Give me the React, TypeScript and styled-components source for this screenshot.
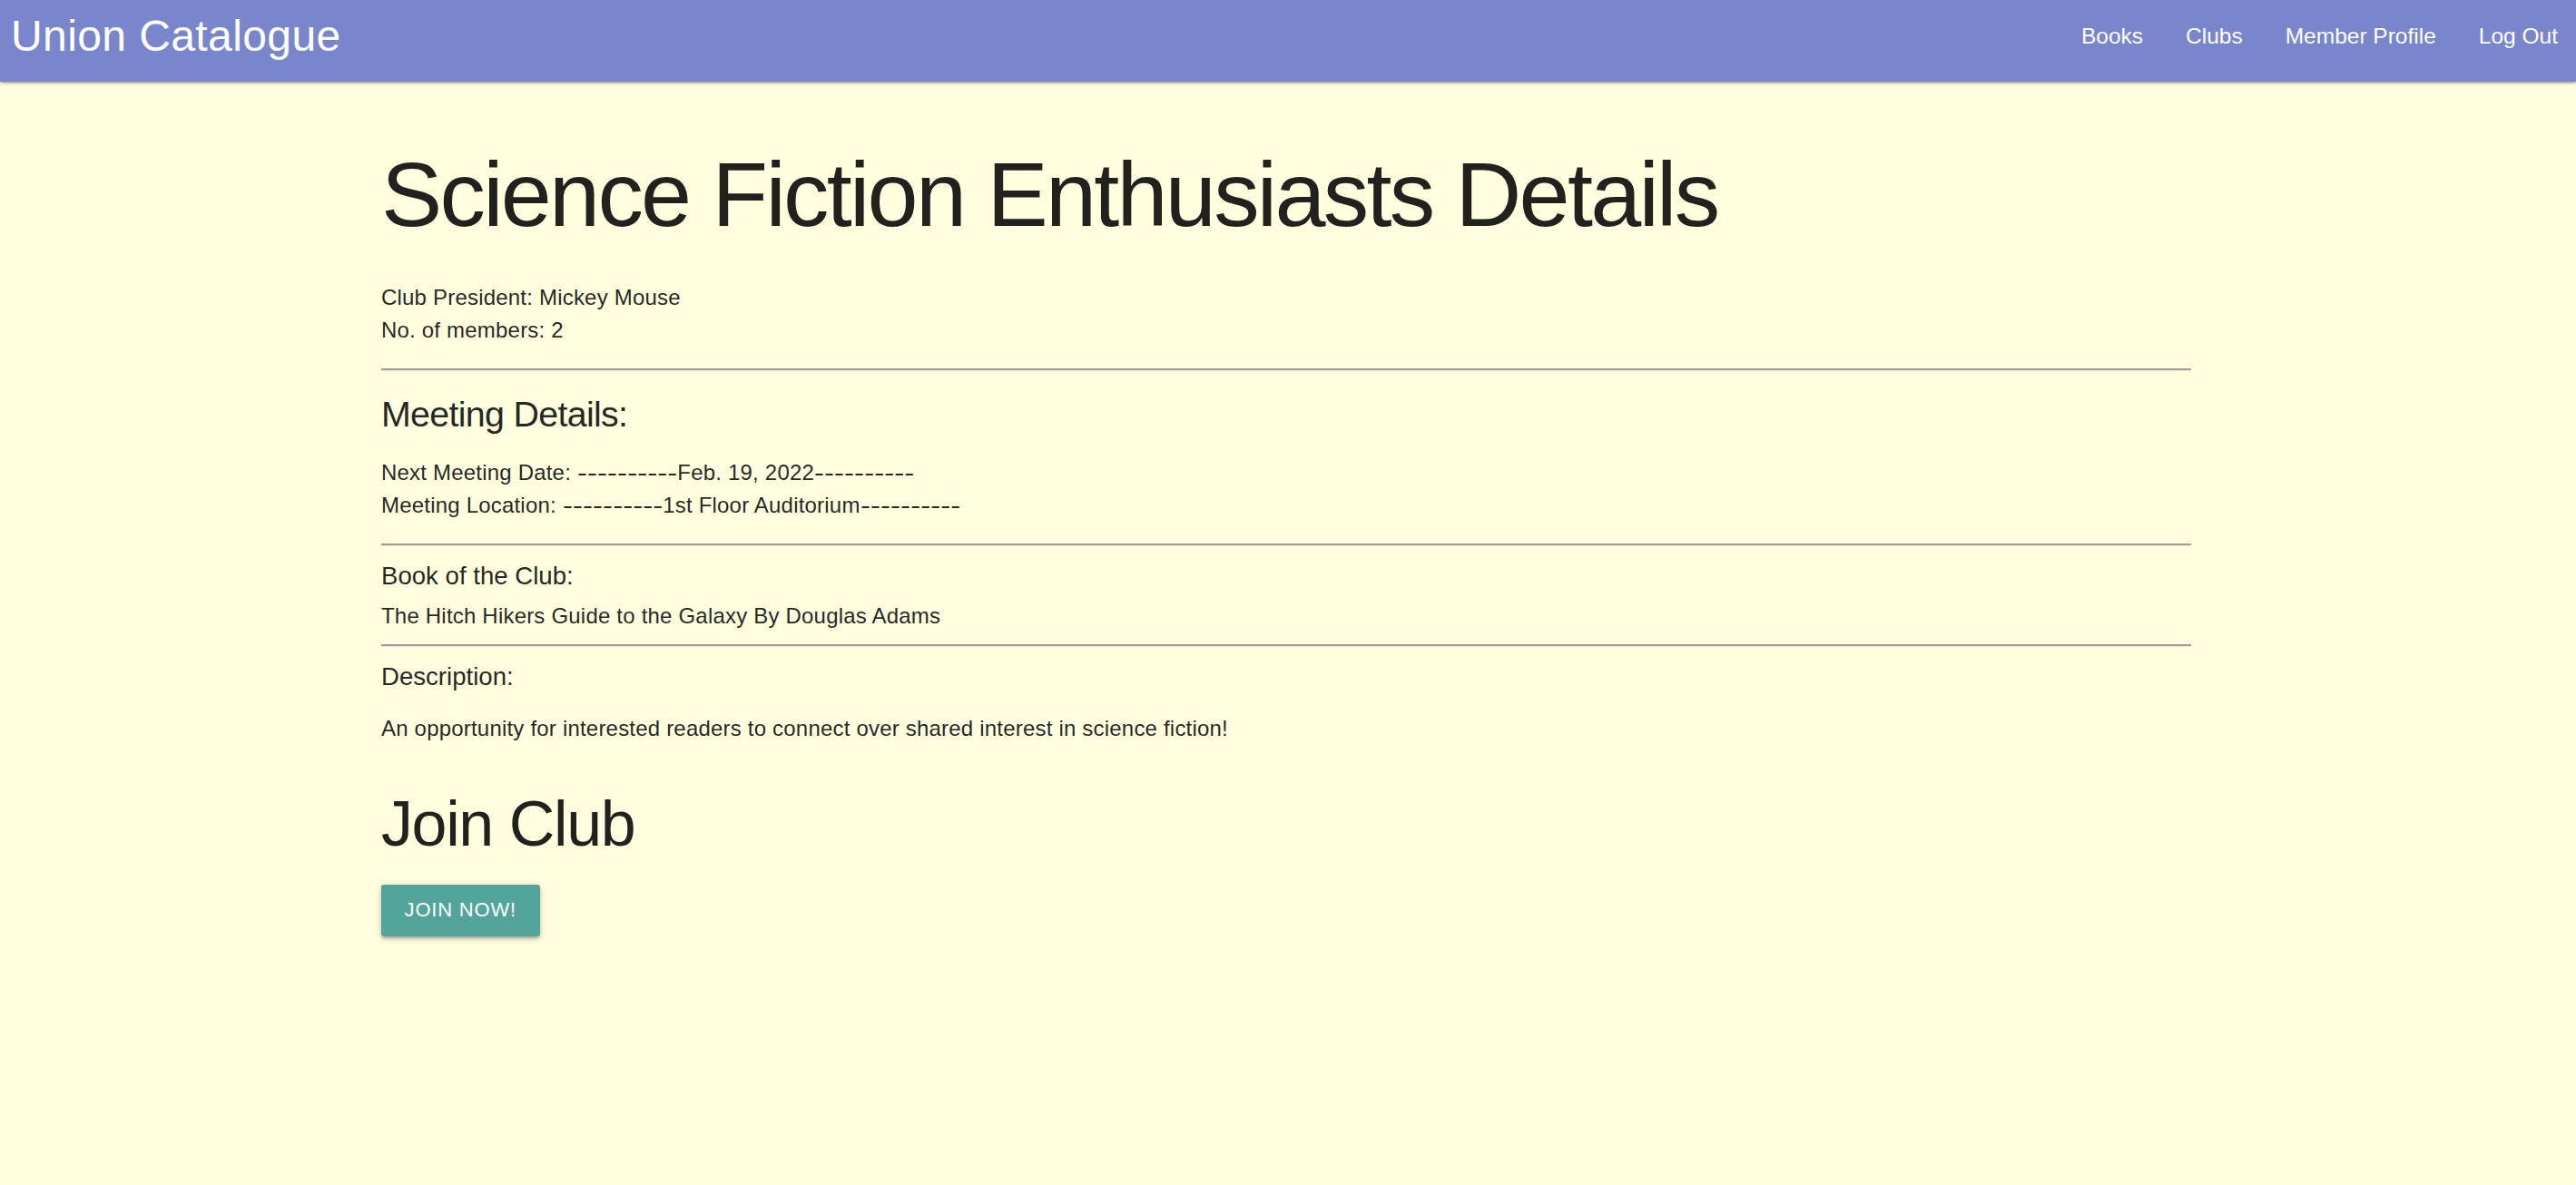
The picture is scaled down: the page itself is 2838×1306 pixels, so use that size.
import React from "react";
import styled, { createGlobalStyle } from "styled-components";

const GlobalStyle = createGlobalStyle`
  html, body {
    margin: 0;
    padding: 0;
  }
  body {
    background: #ffffe0;
    font-family: "Liberation Sans", Arial, "Helvetica Neue", sans-serif;
    color: rgba(0, 0, 0, 0.87);
    font-size: 24px;
    line-height: 1.5;
    min-height: 1306px;
  }
`;

const Nav = styled.nav`
  height: 90px;
  box-sizing: border-box;
  padding-bottom: 10px;
  background: #7986cb;
  color: #ffffff;
  display: flex;
  align-items: center;
  justify-content: space-between;
  box-shadow: 0 2px 2px 0 rgba(0, 0, 0, 0.14), 0 3px 1px -2px rgba(0, 0, 0, 0.12),
    0 1px 5px 0 rgba(0, 0, 0, 0.2);
  position: relative;
  z-index: 1;
`;

const Brand = styled.a`
  padding-left: 12px;
  font-size: 48px;
  letter-spacing: 0.4px;
  line-height: 1;
  color: #ffffff;
  text-decoration: none;
`;

const NavLinks = styled.ul`
  list-style: none;
  margin: 0;
  padding: 0;
  display: flex;
  align-items: center;
`;

const NavLink = styled.li`
  padding: 0 20px 0 27px;
  font-size: 24.5px;
  line-height: 1;
  color: #ffffff;
  cursor: pointer;
`;

const Container = styled.main`
  margin: 0 424px 0 420px;
  letter-spacing: 0.2px;
`;

const Title = styled.h1`
  font-size: 100.8px;
  font-weight: 400;
  line-height: 1.1;
  letter-spacing: -2.75px;
  margin: 69px 0 40.3px;
`;

const Para = styled.p`
  margin: 24px 0;
  line-height: 36px;
`;

const Line = styled.div`
  line-height: 36px;
`;

const Dashes = styled.span`
  display: inline-block;
  letter-spacing: 0;
  transform: scaleX(1.38);
  transform-origin: left center;
  margin-right: 30.5px;
`;

const Rule = styled.hr`
  border: none;
  border-top: 2px solid #9d9d95;
  border-bottom: 1px solid #ebebd8;
  height: 0;
  margin: 12.3px 0;
`;

const SectionHeading = styled.h5`
  font-size: 39.4px;
  font-weight: 400;
  line-height: 1.1;
  letter-spacing: -0.7px;
  margin: 26.2px 0 15.7px;
`;

const SubHeading = styled.h6`
  font-size: 27.6px;
  font-weight: 400;
  line-height: 1.1;
  letter-spacing: 0;
  margin: 18.4px 0 11px;
`;

const JoinHeading = styled.h3`
  font-size: 70px;
  font-weight: 400;
  line-height: 1.1;
  letter-spacing: -1.4px;
  margin: 48.5px 0 28px;
`;

const Button = styled.button`
  height: 57px;
  padding: 0 25.6px;
  border: none;
  border-radius: 3.2px;
  background: #53a59b;
  color: #ffffff;
  font-family: inherit;
  font-size: 22px;
  letter-spacing: 0.8px;
  text-transform: uppercase;
  cursor: pointer;
  box-shadow: 0 3px 3px 0 rgba(0, 0, 0, 0.14), 0 4px 2px -3px rgba(0, 0, 0, 0.12),
    0 2px 8px 0 rgba(0, 0, 0, 0.2);
`;

const links = ["Books", "Clubs", "Member Profile", "Log Out"];

export default function App() {
  return (
    <>
      <GlobalStyle />
      <Nav>
        <Brand>Union Catalogue</Brand>
        <NavLinks>
          {links.map((l) => (
            <NavLink key={l}>{l}</NavLink>
          ))}
        </NavLinks>
      </Nav>
      <Container>
        <Title>Science Fiction Enthusiasts Details</Title>
        <Para>
          Club President: Mickey Mouse
          <br />
          No. of members: 2
        </Para>
        <Rule />
        <SectionHeading>Meeting Details:</SectionHeading>
        <Para>
          Next Meeting Date: <Dashes>----------</Dashes>Feb. 19, 2022
          <Dashes>----------</Dashes>
          <br />
          Meeting Location: <Dashes>----------</Dashes>1st Floor Auditorium
          <Dashes>----------</Dashes>
        </Para>
        <Rule />
        <SubHeading>Book of the Club:</SubHeading>
        <Line>The Hitch Hikers Guide to the Galaxy By Douglas Adams</Line>
        <Rule />
        <SubHeading>Description:</SubHeading>
        <Para>
          An opportunity for interested readers to connect over shared interest in science fiction!
        </Para>
        <JoinHeading>Join Club</JoinHeading>
        <Button>Join Now!</Button>
      </Container>
    </>
  );
}
